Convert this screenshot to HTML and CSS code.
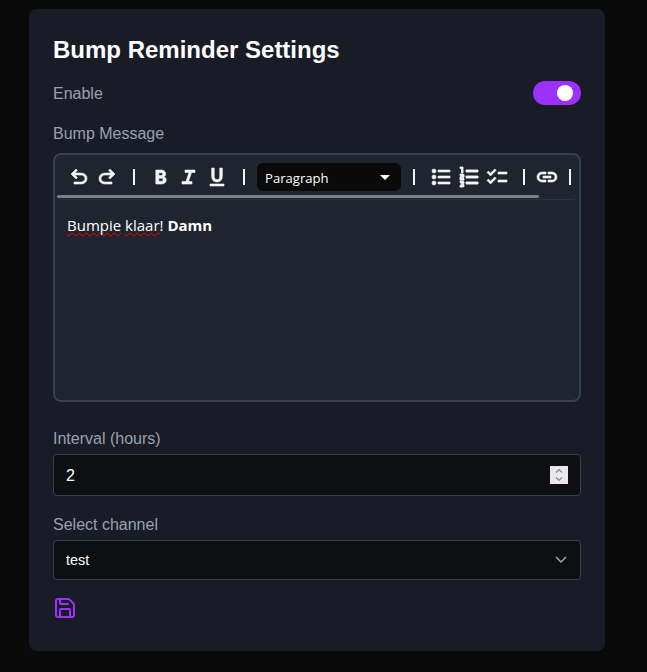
FILE: index.html
```html
<!DOCTYPE html>
<html lang="en">
<head>
<meta charset="utf-8">
<title>Bump Reminder Settings</title>
<link rel="stylesheet" href="styles.css">
</head>
<body>
<main class="card">
  <h1>Bump Reminder Settings</h1>
  <div class="enable"><span>Enable</span><div class="toggle" role="switch" aria-checked="true"><i></i></div></div>
  <div class="label message-label">Bump Message</div>
  <section class="editor">
    <div class="toolbar">
      <div class="group">
        <span class="tool"><svg viewBox="0 -960 960 960"><path d="M280-200v-80h284q63 0 109.500-40T720-420q0-60-46.500-100T564-560H312l104 104-56 56-200-200 200-200 56 56-104 104h252q97 0 169.500 63T800-420q0 94-72.500 157T564-200H280Z"/></svg></span>
        <span class="tool"><svg viewBox="0 -960 960 960"><path d="M396-200q-97 0-169.500-63T160-420q0-94 66.500-157T396-640h252L544-744l56-56 200 200-200 200-56-56 104-104H396q-63 0-109.500 40T240-420q0 60 46.500 100T396-280h284v80H396Z"/></svg></span>
      </div>
      <i class="sep"></i>
      <div class="group">
        <span class="tool"><svg viewBox="0 -960 960 960"><path d="M272-200v-560h221q65 0 120 40t55 111q0 51-23 78.500T602-491q25 11 55.500 41t30.500 90q0 89-65 124.500T501-200H272Zm121-112h104q48 0 58.500-24.500T566-372q0-11-10.500-35.500T494-432H393v120Zm0-228h93q33 0 48-17t15-38q0-24-17-39t-44-15h-95v109Z"/></svg></span>
        <span class="tool"><svg viewBox="0 -960 960 960"><path d="M200-200v-100h160l120-360H320v-100h400v100H580L460-300h140v100H200Z"/></svg></span>
        <span class="tool"><svg viewBox="0 -960 960 960"><path d="M200-120v-80h560v80H200Zm280-160q-101 0-157-63t-56-167v-330h103v336q0 56 28 91t82 35q54 0 82-35t28-91v-336h103v330q0 104-56 167t-157 63Z"/></svg></span>
      </div>
      <i class="sep"></i>
      <div class="block-type"><span>Paragraph</span><svg width="10" height="5" viewBox="0 0 10 5"><path d="M0 0h10L5 5Z"/></svg></div>
      <i class="sep"></i>
      <div class="group">
        <span class="tool"><svg viewBox="0 -960 960 960"><path d="M360-200v-80h480v80H360Zm0-240v-80h480v80H360Zm0-240v-80h480v80H360Z"/><circle cx="200" cy="-240" r="80"/><circle cx="200" cy="-480" r="80"/><circle cx="200" cy="-720" r="80"/></svg></span>
        <span class="tool numbered"><svg viewBox="0 -960 960 960"><path d="M120-80v-60h100v-30h-60v-60h60v-30H120v-60h120q17 0 28.500 11.500T280-280v40q0 17-11.500 28.500T240-200q17 0 28.500 11.500T280-160v40q0 17-11.500 28.500T240-80H120Zm0-280v-110q0-17 11.500-28.500T160-510h60v-30H120v-60h120q17 0 28.500 11.500T280-560v70q0 17-11.500 28.500T240-450h-60v30h100v60H120Zm60-280v-180h-60v-60h120v240h-60Zm180 440v-80h480v80H360Zm0-240v-80h480v80H360Zm0-240v-80h480v80H360Z"/></svg></span>
        <span class="tool"><svg viewBox="0 -960 960 960"><path d="M222-200 80-342l56-56 85 85 170-170 56 57-225 226Zm0-320L80-662l56-56 85 85 170-170 56 57-225 226Zm298 240v-80h360v80H520Zm0-320v-80h360v80H520Z"/></svg></span>
      </div>
      <i class="sep"></i>
      <span class="tool link"><svg viewBox="0 -960 960 960"><path d="M440-280H280q-83 0-141.500-58.500T80-480q0-83 58.500-141.500T280-680h160v80H280q-50 0-85 35t-35 85q0 50 35 85t85 35h160v80ZM320-440v-80h320v80H320Zm200 160v-80h160q50 0 85-35t35-85q0-50-35-85t-85-35H520v-80h160q83 0 141.500 58.500T880-480q0 83-58.500 141.500T680-280H520Z"/></svg></span>
      <i class="sep"></i>
    </div>
    <div class="scroll"><i></i></div>
    <p class="content"><span class="misspelled">Bumpie</span> <span class="misspelled">klaar</span>! <b>Damn</b></p>
  </section>
  <div class="label">Interval (hours)</div>
  <div class="field interval"><span>2</span><span class="spinner"><svg width="18" height="18" viewBox="0 0 18 18"><path d="M6 6.500 9 3.700l3 2.800M6 11.500l3 2.800 3-2.800"/></svg></span></div>
  <div class="label">Select channel</div>
  <div class="field channel"><span>test</span><svg width="12" height="8" viewBox="0 0 12 8"><path d="m1 1 5 5 5-5"/></svg></div>
  <svg class="save" width="24" height="24" viewBox="0 0 24 24"><path d="M15.200 3a2 2 0 0 1 1.400.6l3.800 3.800a2 2 0 0 1 .6 1.400V19a2 2 0 0 1-2 2H5a2 2 0 0 1-2-2V5a2 2 0 0 1 2-2zM17 21v-7a1 1 0 0 0-1-1H8a1 1 0 0 0-1 1v7M7 3v4a1 1 0 0 0 1 1h7"/></svg>
</main>
</body>
</html>
```
FILE: styles.css
```css
* { box-sizing: border-box; }
body {
  margin: 0;
  height: 672px;
  overflow: hidden;
  padding: 9px 0 0 29px;
  background: #0a0a0a;
  font: 16px/24px "Liberation Sans", Arial, sans-serif;
  color: #fff;
}
.card {
  width: 576px;
  height: 642px;
  padding: 25px 24px 24px;
  border-radius: 8px;
  background: #191b26;
}
h1 { margin: 0 0 15px; font-size: 24px; line-height: 32px; font-weight: 700; }
.enable {
  display: flex;
  align-items: flex-start;
  justify-content: space-between;
  height: 24px;
  margin-bottom: 16px;
  color: #99a1af;
}
.toggle {
  display: flex;
  align-items: center;
  justify-content: flex-end;
  width: 48px;
  height: 24px;
  padding-right: 8px;
  border-radius: 12px;
  background: #9b30ff;
}
.toggle i { width: 16px; height: 16px; border-radius: 50%; background: #fff; }
.enable > span { line-height: 26px; }
.label { height: 24px; line-height: 26px; color: #99a1af; margin-bottom: 4px; }
.message-label { margin-bottom: 8px; }
.editor {
  height: 249px;
  margin-bottom: 24px;
  padding: 2px;
  border: 2px solid #334155;
  border-radius: 8px;
  background: #20242f;
}
.toolbar {
  display: flex;
  align-items: center;
  height: 38px;
  padding: 2px 0 0 8px;
  overflow: hidden;
}
.group { display: flex; }
.tool { display: flex; justify-content: center; width: 28px; flex: none; }
.tool svg { width: 24px; height: 24px; flex: none; fill: #f4f6f5; stroke: #f4f6f5; stroke-width: 24; }
.numbered svg { stroke-width: 36; }
.link { width: 20px; }
.sep { width: 2px; height: 16px; margin: 0 12px; background: #f1f1f3; flex: none; }
.block-type {
  display: flex;
  align-items: center;
  justify-content: space-between;
  width: 144px;
  height: 28px;
  padding: 2px 11px 0 8px;
  border-radius: 6px;
  background: #0a0a0a;
  font: 13.1px/20px "Open Sans", sans-serif;
  flex: none;
}
.block-type svg { fill: #fff; margin-top: -2px; }
.scroll { height: 5px; border-bottom: 1px solid #2c313c; border-radius: 0 0 6px 6px; }
.scroll i { display: block; width: 482px; height: 3px; border-radius: 2px; background: #7c7f85; }
.content { margin: 13px 10px; font: 15px/24px "Open Sans", sans-serif; }
.content b { font-weight: 700; }
.misspelled { text-decoration: underline wavy #f00 1.3px; text-underline-offset: 1px; text-decoration-skip-ink: none; }
.field {
  display: flex;
  align-items: center;
  justify-content: space-between;
  padding: 0 12px;
  border: 1px solid #334155;
  border-radius: 4px;
  background: #0e0f13;
}
.interval { height: 42px; margin-bottom: 16px; }
.interval > span:first-child { padding-top: 1px; }
.channel { height: 40px; padding-right: 13px; font-size: 14.4px; }
.field svg { fill: none; stroke: #a0a6b2; stroke-width: 1.5; }
.spinner { display: flex; background: #e9e9ed; }
.spinner svg { stroke: #90919a; }
.save { display: block; margin-top: 16px; fill: none; stroke: #9b30ff; stroke-width: 2; stroke-linecap: round; stroke-linejoin: round; }
```
